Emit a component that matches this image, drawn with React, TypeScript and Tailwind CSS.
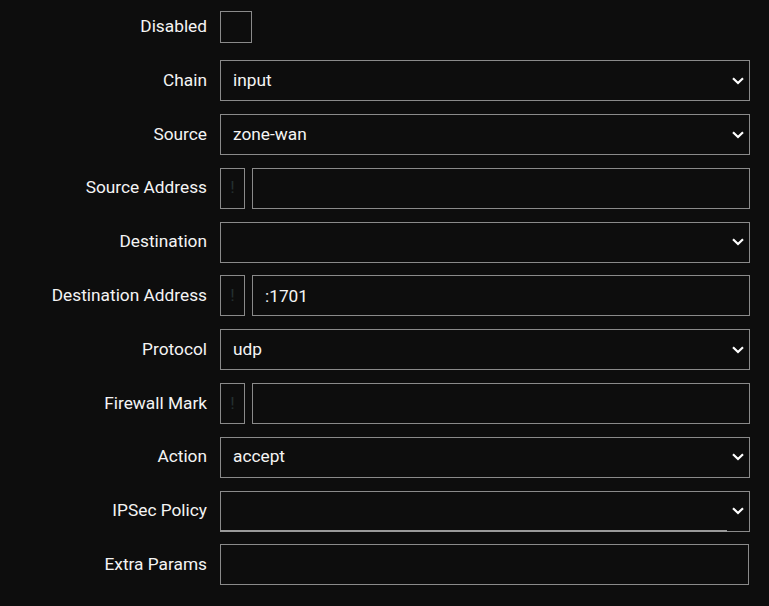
import React from 'react';

const fieldBox = 'h-[41px] border border-[#8a8a8a] bg-[#0d0d0d] text-[17.3px]';

function Chevron() {
  return (
    <svg
      className="pointer-events-none absolute right-[6px] top-1/2 -translate-y-1/2"
      width="12"
      height="8"
      viewBox="0 0 12 8"
      fill="none"
    >
      <polyline points="1,1.2 6,6 11,1.2" stroke="#ffffff" strokeWidth="2.2" />
    </svg>
  );
}

function SelectField({ value, underline }: { value: string; underline?: boolean }) {
  return (
    <div className="relative w-[530px]">
      <select
        defaultValue={value}
        className={`${fieldBox} w-full appearance-none pl-[12px] text-[#f4f4f4] outline-none`}
      >
        <option value={value}>{value}</option>
      </select>
      <Chevron />
      {/* odd double bottom line on the IPSec select */}
      {underline && <div className="absolute bottom-0 left-0 h-[2px] w-[507px] bg-[#9a9a9a]" />}
    </div>
  );
}

function TextField({ value = '', width = 'w-[530px]' }: { value?: string; width?: string }) {
  return (
    <input
      type="text"
      defaultValue={value}
      className={`${fieldBox} ${width} pl-[12px] text-[#f4f4f4] outline-none`}
    />
  );
}

function InvertField({ value = '' }: { value?: string }) {
  return (
    <div className="flex w-[530px] gap-[7px]">
      <div className={`${fieldBox} flex w-[25px] shrink-0 items-center justify-center text-[#243030]`}>!</div>
      <TextField value={value} width="flex-1" />
    </div>
  );
}

export default function App() {
  const rows: Array<{ label: string; field: React.ReactNode }> = [
    {
      label: 'Disabled',
      field: <div className="h-[32px] w-[32px] border border-[#8a8a8a]" />,
    },
    { label: 'Chain', field: <SelectField value="input" /> },
    { label: 'Source', field: <SelectField value="zone-wan" /> },
    { label: 'Source Address', field: <InvertField /> },
    { label: 'Destination', field: <SelectField value="" /> },
    { label: 'Destination Address', field: <InvertField value=":1701" /> },
    { label: 'Protocol', field: <SelectField value="udp" /> },
    { label: 'Firewall Mark', field: <InvertField /> },
    { label: 'Action', field: <SelectField value="accept" /> },
    { label: 'IPSec Policy', field: <SelectField value="" underline /> },
    { label: 'Extra Params', field: <TextField width="w-[529px]" /> },
  ];

  return (
    <div
      className="min-h-[606px] w-[769px] bg-[#0d0d0d] pt-[6.5px]"
      style={{ fontFamily: 'Roboto, "Noto Sans", sans-serif' }}
    >
      <div className="flex flex-col gap-[12.8px]">
        {rows.map(r => (
          <div key={r.label} className="flex h-[41px] items-center">
            <div className="w-[207px] shrink-0 text-right text-[17.3px] text-[#f4f4f4]">{r.label}</div>
            <div className="ml-[13px] flex items-center">{r.field}</div>
          </div>
        ))}
      </div>
    </div>
  );
}
